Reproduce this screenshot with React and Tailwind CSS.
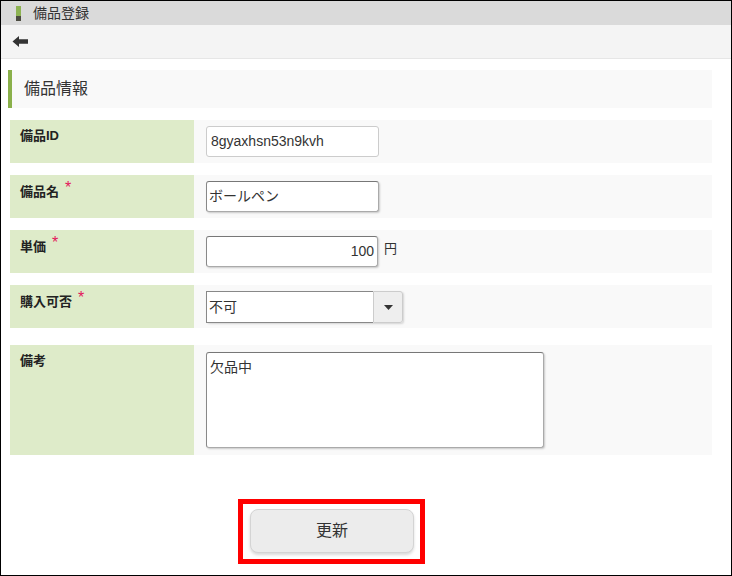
import React from 'react';

const font = { fontFamily: '"Liberation Sans", "Noto Sans CJK JP", sans-serif' };

function Label({ text, required }) {
  return (
    <div className="w-[184px] shrink-0 bg-[#deebc9] pl-[10px] pt-[6px] text-[13px] font-bold leading-[20px] text-[#222]">
      {text}
      {required && <span className="relative -top-[3px] ml-[6px] text-[16px] font-normal text-[#e3165b]">*</span>}
    </div>
  );
}

function Row({ label, required, height = 'h-[43px]', children, className = '' }) {
  return (
    <div className={`ml-[9px] flex w-[702px] ${height} ${className}`}>
      <Label text={label} required={required} />
      <div className="flex flex-1 items-start bg-[#f9f9f9] pl-[12px] pt-[6px]">{children}</div>
    </div>
  );
}

const activeBox = 'border border-[#aaa] border-t-[#777] border-l-[#888] rounded-[3px] bg-white shadow-[1px_1px_2px_rgba(0,0,0,0.2)]';

export default function App() {
  return (
    <div className="box-border h-[576px] w-[732px] overflow-hidden border border-black bg-white text-[#333]" style={font}>
      <div className="flex h-[24px] items-center bg-[#dadada] pl-[15px]">
        <div className="flex h-[15px] w-[5px] flex-col">
          <div className="h-[10px] bg-[#8db352]" />
          <div className="h-[5px] bg-[#4b4b40]" />
        </div>
        <span className="ml-[12px] text-[14px] leading-none text-[#333]">備品登録</span>
      </div>
      <div className="flex h-[34px] items-center border-b border-[#e6e6e6] bg-[#f4f4f4] pl-[11px]">
        <svg width="17" height="11" viewBox="0 0 17 11">
          <path d="M0.5 5.5 L7 0 L7 3.2 L16 3.2 L16 7.8 L7 7.8 L7 11 Z" fill="#333" />
        </svg>
      </div>

      <div className="ml-[7px] mt-[11px] flex h-[38px] w-[704px] items-center border-l-4 border-[#8ab04a] bg-[#f9f9f9] pl-[12px]">
        <span className="text-[16px] text-[#333]">備品情報</span>
      </div>

      <Row label="備品ID" className="mt-[12px]">
        <div className="flex h-[31px] w-[173px] items-center rounded-[3px] border border-[#ccc] bg-white pl-[4px] text-[14px] text-[#333]">
          8gyaxhsn53n9kvh
        </div>
      </Row>

      <Row label="備品名" required className="mt-[12px]">
        <div className={`flex h-[31px] w-[173px] items-center pl-[2px] text-[14px] ${activeBox}`}>ボールペン</div>
      </Row>

      <Row label="単価" required className="mt-[12px]">
        <div className={`flex h-[31px] w-[172px] items-center justify-end pr-[3px] text-[14px] ${activeBox}`}>100</div>
        <span className="ml-[6px] mt-[6px] text-[13px] leading-none text-[#333]">円</span>
      </Row>

      <Row label="購入可否" required className="mt-[12px]">
        <div className="flex h-[32px] w-[197px] rounded-[3px] shadow-[1px_1px_2px_rgba(0,0,0,0.15)]">
          <div className="flex w-[167px] items-center border border-[#888] border-r-0 bg-white pl-[2px] text-[14px]">不可</div>
          <div className="flex w-[30px] items-center justify-center rounded-r-[3px] border border-[#ccc] bg-[#eeeeee]">
            <svg width="9" height="5" viewBox="0 0 9 5">
              <path d="M0 0 L9 0 L4.5 5 Z" fill="#333" />
            </svg>
          </div>
        </div>
      </Row>

      <Row label="備考" height="h-[110px]" className="mt-[17px]">
        <div className={`mt-[1px] h-[96px] w-[338px] pl-[3px] pt-[5px] text-[14px] leading-[18px] ${activeBox}`}>欠品中</div>
      </Row>

      <div className="ml-[237px] mt-[44px] w-[187px] border-[5px] border-[#ff0000] pb-[6px] pl-[7px] pt-[5px]">
        <button className="flex h-[44px] w-[164px] items-center justify-center rounded-[8px] border border-[#d4d4d4] bg-[#ececec] text-[16px] text-[#333] shadow-[0_2px_3px_rgba(0,0,0,0.15)]">
          更新
        </button>
      </div>
    </div>
  );
}
